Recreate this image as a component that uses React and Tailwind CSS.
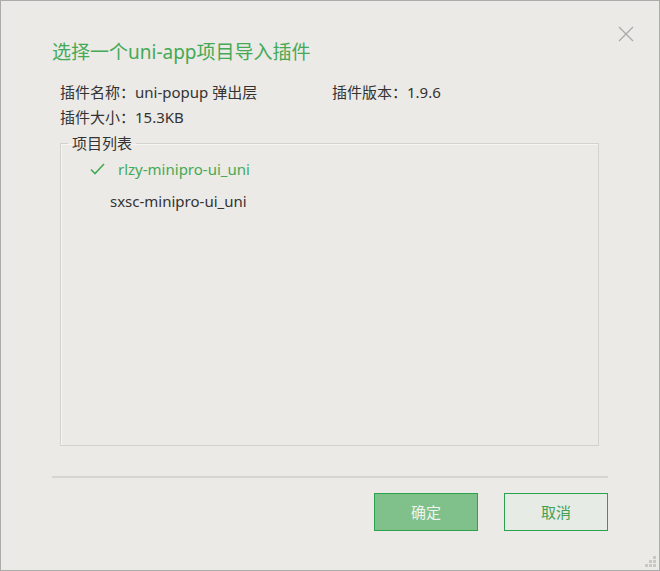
// Dialog: choose a uni-app project to import a plugin into

const font = { fontFamily: '"Noto Sans", "Noto Sans CJK SC", sans-serif' };

const projects = [
  { name: 'rlzy-minipro-ui_uni', checked: true },
  { name: 'sxsc-minipro-ui_uni', checked: false },
];

export default function App() {
  return (
    <div
      className="relative w-[660px] h-[571px] border border-[#ababab] bg-[#ebeae6] flex flex-col px-[51px] pt-[37px] text-[#333]"
      style={font}
    >
      <button className="absolute top-[24px] right-[24px] w-[18px] h-[18px] flex items-center justify-center">
        <svg width="16" height="16" viewBox="0 0 16 16" fill="none" stroke="#a8a8a8" strokeWidth="1.2">
          <path d="M1 1 L15 15 M15 1 L1 15" />
        </svg>
      </button>

      <h1 className="text-[19px] leading-[28px] text-[#45a955]">选择一个uni-app项目导入插件</h1>

      <div className="ml-[8px] mt-[14px] text-[15px] leading-[25px]">
        <div className="flex">
          <span className="w-[272px]">插件名称：uni-popup 弹出层</span>
          <span>插件版本：1.9.6</span>
        </div>
        <div>插件大小：15.3KB</div>
      </div>

      <fieldset className="ml-[8px] mt-[3px] w-[539px] h-[313px] border border-[#d3d2cd] shadow-[inset_1px_1px_0_#f6f5f2]">
        <legend className="ml-[7px] px-[4px] text-[15px] leading-[20px]">项目列表</legend>
        <ul className="text-[15px]">
          {projects.map((p) => (
            <li key={p.name} className="flex items-center h-[32px] pl-[29px]">
              {p.checked ? (
                <>
                  <svg width="15" height="12" viewBox="0 0 15 12" fill="none" stroke="#45a955" strokeWidth="1.6">
                    <path d="M1 6.5 L5 10.5 L14 1" />
                  </svg>
                  <span className="ml-[13px] text-[#45a955]">{p.name}</span>
                </>
              ) : (
                <span className="ml-[20px]">{p.name}</span>
              )}
            </li>
          ))}
        </ul>
      </fieldset>

      <div className="mt-[30px] h-[2px] bg-[#d6d5d0]" />

      <div className="mt-[15px] flex justify-end gap-[26px] text-[15px]">
        <button className="w-[104px] h-[38px] border border-[#2ba24d] bg-[#80c18b] text-[#eef5ee]">确定</button>
        <button className="w-[104px] h-[38px] border border-[#2ba24d] bg-[#e6ebe6] text-[#43a053]">取消</button>
      </div>

      <svg className="absolute right-[2px] bottom-[2px]" width="12" height="12" viewBox="0 0 12 12" fill="#c9c8c4">
        <rect x="8" y="0" width="3" height="3" />
        <rect x="4" y="4" width="3" height="3" />
        <rect x="8" y="4" width="3" height="3" />
        <rect x="0" y="8" width="3" height="3" />
        <rect x="4" y="8" width="3" height="3" />
        <rect x="8" y="8" width="3" height="3" />
      </svg>
    </div>
  );
}
